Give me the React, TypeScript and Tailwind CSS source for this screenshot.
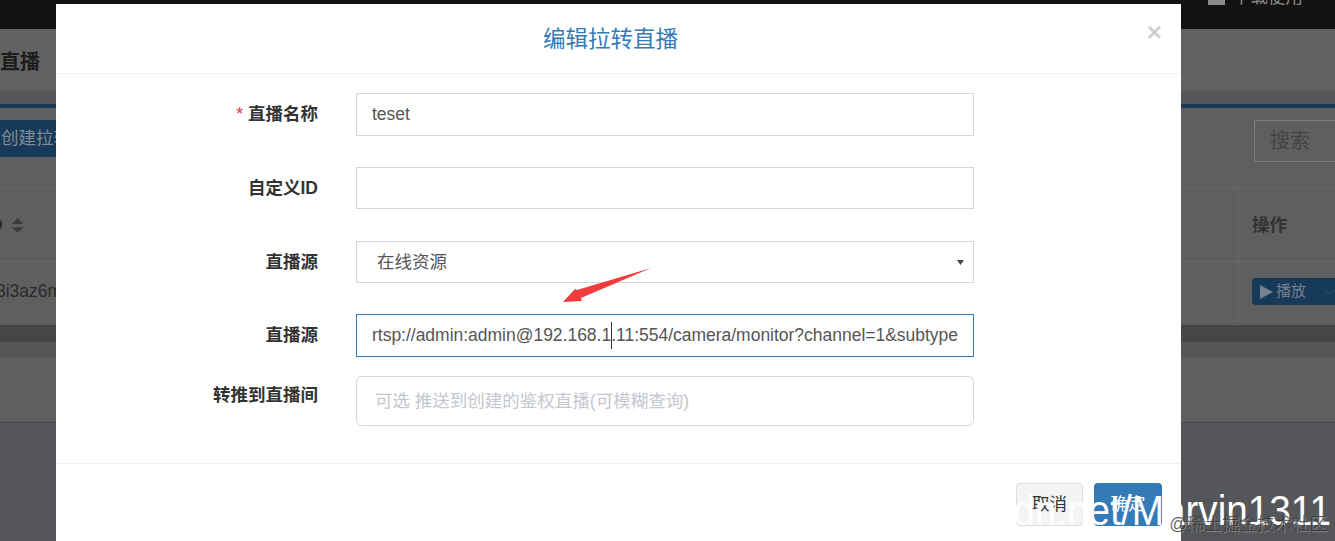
const cjk = 'font-["Liberation_Sans","Noto_Sans_CJK_SC",sans-serif]';

function Label({ children, required }: { children: React.ReactNode; required?: boolean }) {
  return (
    <div className="w-[262px] shrink-0 text-right text-[17.5px] font-bold leading-[25px] text-[#333]">
      {required && <span className="mr-[5px] font-normal text-[#c9403c]">*</span>}
      {children}
    </div>
  );
}

function Backdrop() {
  return (
    <div className="flex h-full w-full flex-col bg-[#555659]">
      <div className="flex h-[29px] shrink-0 items-start justify-end overflow-hidden bg-[#121212] pr-[32px]">
        <div className="-mt-[15px] flex items-center gap-[8px] text-[17.5px] leading-[25px] text-[#8c8c8c]">
          <span className="h-[15px] w-[17px] bg-[#8c8c8c]" />
          下载便用
        </div>
      </div>
      <div className="flex h-[62px] shrink-0 items-center bg-[#616161] pt-[3px] text-[20px] font-bold text-[#1c1c1c]">
        <span>直播</span>
      </div>
      <div className="h-[13px] shrink-0 bg-[#54565a]" />
      <div className="h-[4px] shrink-0 bg-[#17395a]" />
      <div className="flex h-[80px] shrink-0 items-start justify-between border-b border-[#6a6a6a] bg-[#5f5f5f] pt-[12px]">
        <div className="flex h-[37px] w-[56px] items-center overflow-hidden whitespace-nowrap bg-[#17395a] pl-px text-[17.5px] text-[#818b96]">
          创建拉转
        </div>
        <div className="-mr-[10px] flex h-[42px] w-[91px] items-center border border-[#7b7b7b] pl-[15px] text-[20px] text-[#444]">
          搜索
        </div>
      </div>
      <div className="flex h-[74px] shrink-0 items-center justify-between border-b border-[#6a6a6a] bg-[#5f5f5f]">
        <div className="-ml-[10px] flex items-center gap-[8px] pt-[2px]">
          <span className="text-[17.5px] font-bold leading-none text-[#2a2a2a]">D</span>
          <svg width="13" height="15" viewBox="0 0 13 15">
            <path d="M6.500 0 L12.500 6 H0.500 Z M0.500 9 H12.500 L6.500 15 Z" fill="#3d3d3d" />
          </svg>
        </div>
        <div className="flex h-full w-[97px] items-center border-l border-[#666] pl-[13px] pt-[2px] text-[17.5px] font-bold text-[#333]">
          操作
        </div>
      </div>
      <div className="flex h-[60px] shrink-0 items-center justify-between border-b border-[#666] bg-[#5f5f5f]">
        <div className="-ml-[4px] text-[17.5px] text-[#2a2a2a]">3i3az6m</div>
        <div className="flex h-full w-[97px] items-center border-l border-[#666] pl-[13px]">
          <div className="flex h-[27px] w-[84px] shrink-0 items-center gap-[3px] whitespace-nowrap rounded-l-[4px] bg-[#17395a] pl-[8px] text-[15px] text-[#77828e]">
            <svg className="shrink-0" width="13" height="14" viewBox="0 0 13 14">
              <path d="M0 0 L13 7 L0 14 Z" fill="#77828e" />
            </svg>
            播放
            <svg className="ml-[14px] shrink-0" width="12" height="7" viewBox="0 0 12 7">
              <path d="M1 1 L6 6 L11 1" fill="none" stroke="#2f4d6b" strokeWidth="1" />
            </svg>
          </div>
        </div>
      </div>
      <div className="h-[3px] shrink-0 bg-[#5c5c5c]" />
      <div className="h-[17px] shrink-0 bg-[#464646]" />
      <div className="h-[15px] shrink-0 bg-[#565656]" />
      <div className="h-[66px] shrink-0 border-b border-[#484848] border-t border-t-[#5a5a5a] bg-[#5f5f5f]" />
      <div className="flex-1 bg-[#555659]" />
    </div>
  );
}

function Dialog() {
  const inputCls =
    "h-full w-[618px] border border-[#d2d6de] px-[15px] text-[17.5px] text-[#555] outline-none";
  return (
    <div className="flex h-[537px] w-[1125px] flex-col bg-white">
      <div className="relative flex h-[70px] shrink-0 items-center justify-center border-b border-[#f0f0f0] pr-[16px] pt-[2px]">
        <h4 className="text-[22.5px] font-normal text-[#337ab7]">编辑拉转直播</h4>
        <span className="absolute right-[19px] top-[13px] text-[26px] font-bold leading-[30px] text-[#cfcfcf]">×</span>
      </div>

      <div className="flex flex-col pt-[19px]">
        <div className="flex h-[43px] items-center gap-[38px]">
          <Label required>直播名称</Label>
          <input readOnly value="teset" className={inputCls} />
        </div>
        <div className="mt-[31px] flex h-[42px] items-center gap-[38px]">
          <Label>自定义ID</Label>
          <input readOnly value="" className={inputCls} />
        </div>
        <div className="mt-[32px] flex h-[42px] items-center gap-[38px]">
          <Label>直播源</Label>
          <div className="flex h-full w-[618px] items-center justify-between border border-[#d2d6de] pl-[20px] pr-[9px] text-[17.5px] text-[#555]">
            在线资源
            <svg width="7" height="5" viewBox="0 0 7 5">
              <path d="M0 0 H7 L3.500 5 Z" fill="#444" />
            </svg>
          </div>
        </div>
        <div className="mt-[31px] flex h-[43px] items-center gap-[38px]">
          <Label>直播源</Label>
          <div className="flex h-full w-[618px] items-center overflow-hidden whitespace-nowrap border border-[#337ab7] px-[15px] text-[17.5px] tracking-[-0.015px] text-[#555]">
            rtsp://admin:admin@192.168.1
            <span className="-mr-px h-[27px] w-px shrink-0 bg-[#333]" />
            .11:554/camera/monitor?channel=1&amp;subtype
          </div>
        </div>
        <div className="mt-[19px] flex h-[50px] items-start gap-[38px]">
          <div className="pt-[7px]">
            <Label>转推到直播间</Label>
          </div>
          <input
            readOnly
            placeholder="可选 推送到创建的鉴权直播(可模糊查询)"
            className={`${inputCls} rounded-[6px] pl-[18px] placeholder:text-[#c4c7cd]`}
          />
        </div>
      </div>

      <div className="mt-[37px] flex flex-1 items-start justify-end gap-[11px] border-t border-[#f0f0f0] pr-[19px] pt-[19px]">
        <button className="h-[43px] w-[67px] rounded-[4px] border border-[#ddd] bg-[#f4f4f4] text-[17.5px] text-[#333]">
          取消
        </button>
        <button className="h-[43px] w-[68px] rounded-[4px] bg-[#337ab7] text-[17.5px] text-white">
          确定
        </button>
      </div>
    </div>
  );
}

export default function App() {
  return (
    <div className={`relative h-[541px] w-[1335px] overflow-hidden ${cjk}`}>
      <Backdrop />
      <div className="absolute left-[56px] top-[4px]">
        <Dialog />
      </div>
      {/* red arrow pasted over the screenshot */}
      <svg className="absolute left-[555px] top-[262px]" width="100" height="46" viewBox="555 262 100 46">
        <path d="M651 268 L577 290 L575 289 L563 302 L582 301 L581 298 Z" fill="#f23c3c" />
      </svg>
      {/* watermarks, the big one is squeezed horizontally in the source */}
      <div className="absolute right-[4px] top-[487px] origin-right scale-x-90 whitespace-nowrap text-[43px] leading-[46px] text-white">
        dn.net/Marvin1311
      </div>
      <div className="absolute right-[8px] top-[514px] whitespace-nowrap text-[17.5px] leading-[20px] text-[#3a3a3a]/80 [text-shadow:1px_1px_0_rgba(255,255,255,0.25)]">
        @稀土掘金技术社区
      </div>
    </div>
  );
}
